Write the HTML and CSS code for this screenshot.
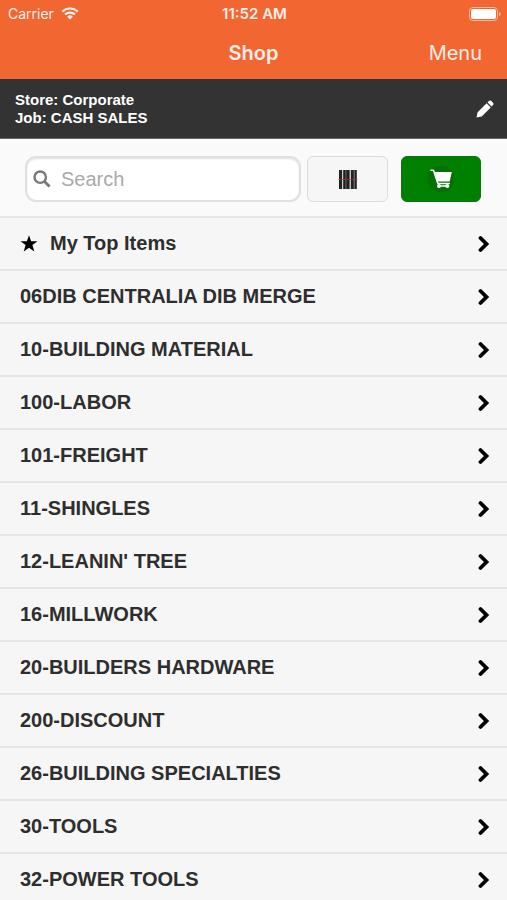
FILE: index.html
```html
<!DOCTYPE html>
<html lang="en">
<head>
<meta charset="utf-8">
<meta name="viewport" content="width=device-width, initial-scale=1">
<title>Shop</title>
<link rel="stylesheet" href="styles.css">
</head>
<body>
<header class="header">
  <div class="status">
    <div class="carrier">
      <span>Carrier</span>
      <svg class="wifi" viewBox="0 0 18 13" aria-hidden="true">
        <path d="M1.200 4.600a11.400 11.400 0 0 1 15.600 0M4 7.500a7.400 7.400 0 0 1 10 0" fill="none" stroke="currentColor" stroke-width="2.200"/>
        <path d="M9 12.600 6.100 9.700a4.100 4.100 0 0 1 5.800 0z" fill="currentColor"/>
      </svg>
    </div>
    <span class="time">11:52 AM</span>
    <svg class="battery" viewBox="0 0 32 14" aria-hidden="true">
      <rect x=".5" y=".5" width="28" height="13" rx="3.500" fill="none" stroke="#f9b698"/>
      <rect x="2" y="2" width="25" height="10" rx="2" fill="#fff"/>
      <path d="M30 5v4q1.800-.6 1.800-2T30 5z" fill="#f9b698"/>
    </svg>
  </div>
  <div class="titlebar">
    <h1 class="title">Shop</h1>
    <button class="menu" type="button">Menu</button>
  </div>
</header>
<section class="store">
  <div>
    <div>Store: Corporate</div>
    <div>Job: CASH SALES</div>
  </div>
  <button class="edit" type="button" aria-label="Edit store and job">
    <svg viewBox="0 0 18 18" aria-hidden="true"><path d="M.5 17.500 1.600 12.300 10.600 3.300 14.700 7.400 5.700 16.400zM11.500 2.400 13.200.8Q14.200 0 15.100.8L17.200 2.900Q18 3.800 17.200 4.800L15.600 6.500z" fill="#fff"/></svg>
  </button>
</section>
<form class="tools">
  <label class="search">
    <svg viewBox="0 0 18 18" aria-hidden="true"><circle cx="7.200" cy="7.200" r="5.700" fill="none" stroke="#777" stroke-width="2.400"/><path d="m11.500 11.500 5 5" stroke="#777" stroke-width="2.800"/></svg>
    <input type="search" placeholder="Search" aria-label="Search">
  </label>
  <button class="tool scan" type="button" aria-label="Scan barcode">
    <svg viewBox="0 0 20 20" aria-hidden="true">
      <path d="M.5 0h19v20H.5z" fill="#888"/>
      <path d="M.5 0h3.200v20H.5zM5 0h2.500v20H5zM8.200 0h3.300v20H8.200zM13 0h3v20h-3zM17 0h2v20h-2z" fill="#222"/>
      <path d="M4 0h.8v20H4zM12 0h.8v20H12z" fill="#eee"/>
      <path d="M0 10h20" stroke="#b5303c" stroke-opacity=".75" stroke-width="1"/>
    </svg>
  </button>
  <button class="tool cart" type="button" aria-label="Cart">
    <svg viewBox="0 0 28 28" aria-hidden="true">
      <circle cx="14" cy="14" r="13.500" fill="#067006"/>
      <path d="M4 5.300h2.500l4.400 13.200h11.300" fill="none" stroke="#fff" stroke-width="1.600" stroke-linecap="round" stroke-linejoin="round"/>
      <path d="M7.300 7H24.800L22.700 16.500H10.300z" fill="#fff"/>
      <circle cx="12" cy="21" r="2" fill="#fff"/><circle cx="20.300" cy="21" r="2" fill="#fff"/>
      <path d="M12 21h8.300" stroke="#fff" stroke-width="1.500"/>
    </svg>
  </button>
</form>
<svg class="defs" aria-hidden="true"><symbol id="chevron" viewBox="0 0 12 18"><path d="m2.500 3 6 6-6 6" fill="none" stroke="#000" stroke-width="3.800" stroke-linecap="round"/></symbol></svg>
<nav class="list" aria-label="Departments">
  <a href="#top"><svg class="star" viewBox="0 0 18 18" aria-hidden="true"><path d="m9 .2 2.100 6h6.400l-5.100 3.900 1.900 6.300L9 12.700l-5.300 3.700 1.900-6.300L.5 6.200h6.400z" fill="#000"/></svg><span>My Top Items</span><svg class="chev" aria-hidden="true"><use href="#chevron"/></svg></a>
  <a href="#06"><span>06DIB CENTRALIA DIB MERGE</span><svg class="chev" aria-hidden="true"><use href="#chevron"/></svg></a>
  <a href="#10"><span>10-BUILDING MATERIAL</span><svg class="chev" aria-hidden="true"><use href="#chevron"/></svg></a>
  <a href="#100"><span>100-LABOR</span><svg class="chev" aria-hidden="true"><use href="#chevron"/></svg></a>
  <a href="#101"><span>101-FREIGHT</span><svg class="chev" aria-hidden="true"><use href="#chevron"/></svg></a>
  <a href="#11"><span>11-SHINGLES</span><svg class="chev" aria-hidden="true"><use href="#chevron"/></svg></a>
  <a href="#12"><span>12-LEANIN' TREE</span><svg class="chev" aria-hidden="true"><use href="#chevron"/></svg></a>
  <a href="#16"><span>16-MILLWORK</span><svg class="chev" aria-hidden="true"><use href="#chevron"/></svg></a>
  <a href="#20"><span>20-BUILDERS HARDWARE</span><svg class="chev" aria-hidden="true"><use href="#chevron"/></svg></a>
  <a href="#200"><span>200-DISCOUNT</span><svg class="chev" aria-hidden="true"><use href="#chevron"/></svg></a>
  <a href="#26"><span>26-BUILDING SPECIALTIES</span><svg class="chev" aria-hidden="true"><use href="#chevron"/></svg></a>
  <a href="#30"><span>30-TOOLS</span><svg class="chev" aria-hidden="true"><use href="#chevron"/></svg></a>
  <a href="#32"><span>32-POWER TOOLS</span><svg class="chev" aria-hidden="true"><use href="#chevron"/></svg></a>
</nav>
</body>
</html>
```
FILE: styles.css
```css
* { box-sizing: border-box; }

body {
  margin: 0;
  background: #fafafa;
  color: #2e2e2e;
  font-family: "Liberation Sans", Arial, sans-serif;
}

button {
  padding: 0;
  border: 0;
  background: none;
  color: inherit;
  font: inherit;
}

svg { display: block; flex: none; }

.defs { position: absolute; width: 0; height: 0; }

.header {
  background: #f16631;
  color: #ffefe8;
  font-family: Inter, "Liberation Sans", sans-serif;
}

.status {
  display: grid;
  grid-template-columns: 1fr auto 1fr;
  align-items: center;
  height: 27px;
  padding: 0 6px 0 8px;
  font-size: 14px;
  line-height: 27px;
}

.carrier { display: flex; align-items: center; gap: 7px; }

.wifi { width: 18px; height: 13px; }

.time { font-size: 15px; font-weight: 600; }

.battery { width: 32px; height: 14px; justify-self: end; }

.titlebar {
  display: grid;
  grid-template-columns: 1fr auto 1fr;
  align-items: center;
  height: 52px;
  padding: 0 25px;
}

.title {
  grid-column: 2;
  margin: 0;
  font-size: 20px;
  font-weight: 600;
}

.menu { justify-self: end; font-size: 20px; }

.store {
  display: flex;
  align-items: center;
  justify-content: space-between;
  height: 60px;
  padding: 0 13px 0 15px;
  border-bottom: 1px solid #666;
  background: #333;
  color: #fff;
  font-size: 15px;
  font-weight: bold;
  line-height: 18px;
}

.edit svg { width: 18px; height: 18px; }

.tools {
  display: flex;
  align-items: center;
  height: 77px;
  padding: 3px 26px 0 25px;
}

.search {
  display: flex;
  flex: 1;
  align-items: center;
  gap: 10px;
  min-width: 0;
  height: 46px;
  margin-right: 6px;
  padding: 0 6px;
  border: 2px solid #e0e0e0;
  border-radius: 11px;
  background: #fff;
  box-shadow: inset 0 1px 2px #ddd;
}

.search svg { width: 18px; height: 18px; }

.search input {
  flex: 1;
  min-width: 0;
  padding: 0;
  border: 0;
  outline: 0;
  background: none;
  color: #333;
  font: 20px "Liberation Sans", Arial, sans-serif;
}

.search input::placeholder { color: #aaa; }

.tool {
  display: grid;
  place-items: center;
  border-radius: 6px;
}

.scan {
  width: 81px;
  height: 46px;
  margin-right: 13px;
  border: 1px solid #dcdcdc;
  background: #f6f6f6;
}

.scan svg { width: 20px; height: 19px; }

.cart {
  width: 80px;
  height: 46px;
  border: 1px solid #0b760b;
  background: #008000;
}

.cart svg { width: 28px; height: 28px; }

.list a {
  display: flex;
  align-items: center;
  height: 53px;
  padding: 0 17px 0 20px;
  border-top: 2px solid #e6e6e6;
  background: #f6f6f6;
  color: #2e2e2e;
  font-size: 20px;
  font-weight: bold;
  text-decoration: none;
}

.star { width: 18px; height: 18px; margin-right: 12px; }

.chev { width: 12px; height: 18px; margin-left: auto; }
```
